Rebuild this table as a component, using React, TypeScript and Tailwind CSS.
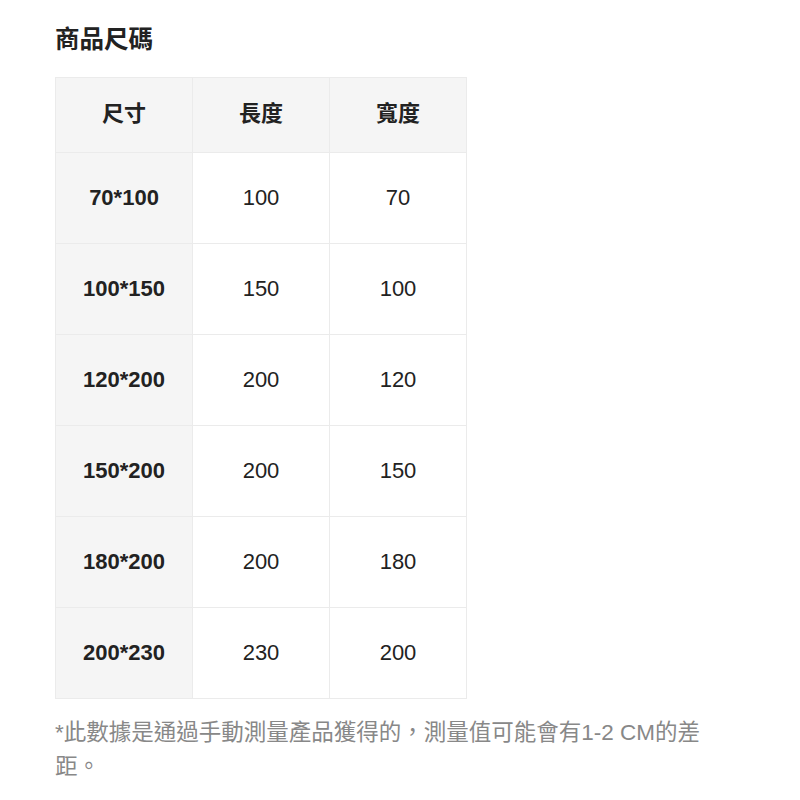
const rows = [
  { size: '70*100', length: '100', width: '70' },
  { size: '100*150', length: '150', width: '100' },
  { size: '120*200', length: '200', width: '120' },
  { size: '150*200', length: '200', width: '150' },
  { size: '180*200', length: '200', width: '180' },
  { size: '200*230', length: '230', width: '200' },
];

export default function App() {
  return (
    <div
      className="min-h-[800px] w-[800px] bg-white px-[55px] pt-[24px] text-[#222]"
      style={{ fontFamily: '"Liberation Sans", "Noto Sans CJK TC", sans-serif' }}
    >
      <h2 className="text-[24.5px] font-bold leading-[32px]">商品尺碼</h2>

      <table className="mt-[21px] border-collapse text-[22px]">
        <thead>
          <tr className="h-[75px] bg-[#f5f5f5]">
            {['尺寸', '長度', '寬度'].map((h) => (
              <th key={h} className="w-[137px] border border-[#ebebeb] pb-[4px] font-bold">
                {h}
              </th>
            ))}
          </tr>
        </thead>
        <tbody>
          {rows.map((r) => (
            <tr key={r.size} className="h-[91px]">
              <td className="border border-[#ebebeb] bg-[#f5f5f5] pb-[2px] text-center font-bold">{r.size}</td>
              <td className="border border-[#ebebeb] pb-[2px] text-center">{r.length}</td>
              <td className="border border-[#ebebeb] pb-[2px] text-center">{r.width}</td>
            </tr>
          ))}
        </tbody>
      </table>

      <p className="mt-[17px] w-[660px] text-[22.5px] leading-[34px] text-[#888]">
        *此數據是通過手動測量產品獲得的，測量值可能會有1-2 CM的差距。
      </p>
    </div>
  );
}
